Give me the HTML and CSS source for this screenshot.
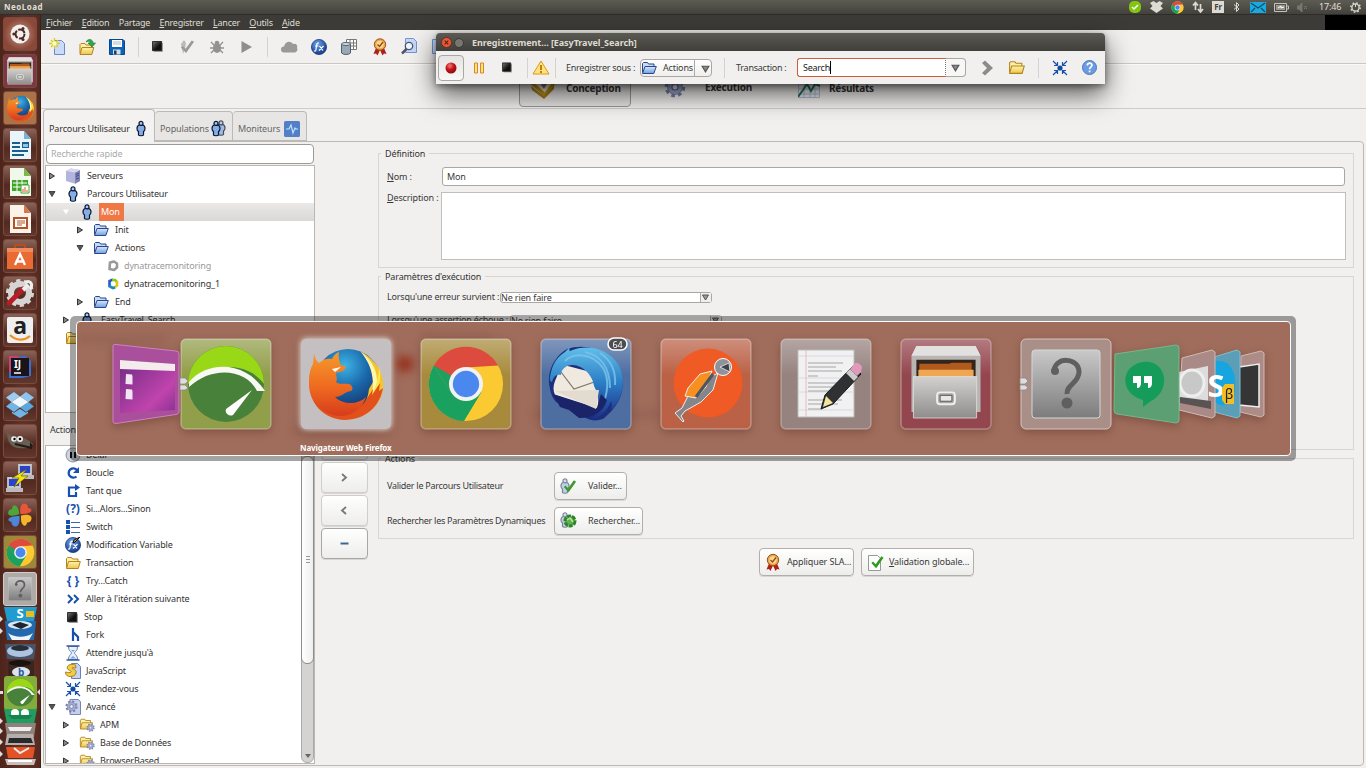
FILE: index.html
```html
<!DOCTYPE html>
<html lang="fr">
<head>
<meta charset="utf-8">
<title>NeoLoad</title>
<link rel="stylesheet" href="styles.css">
</head>
<body>
<svg class="defs" width="0" height="0">
<defs>
<linearGradient id="gFold" x1="0" y1="0" x2="0" y2="1"><stop offset="0" stop-color="#fff3a8"/><stop offset="1" stop-color="#efc44c"/></linearGradient>
<linearGradient id="gBlue" x1="0" y1="0" x2="0" y2="1"><stop offset="0" stop-color="#dbe8fb"/><stop offset="1" stop-color="#6f9ede"/></linearGradient>
<linearGradient id="gBlack" x1="0" y1="0" x2="1" y2="1"><stop offset="0" stop-color="#777"/><stop offset=".6" stop-color="#111"/></linearGradient>
<linearGradient id="gGrey" x1="0" y1="0" x2="0" y2="1"><stop offset="0" stop-color="#c9c9c9"/><stop offset="1" stop-color="#7c7c7c"/></linearGradient>
<linearGradient id="gCab" x1="0" y1="0" x2="0" y2="1"><stop offset="0" stop-color="#d2d1cf"/><stop offset="1" stop-color="#8f8d8b"/></linearGradient>
<linearGradient id="gFox" x1="0" y1="0" x2="0" y2="1"><stop offset="0" stop-color="#f59a2c"/><stop offset=".55" stop-color="#ef6a20"/><stop offset="1" stop-color="#d63c1c"/></linearGradient>
<linearGradient id="gPurp" x1="0" y1="0" x2="1" y2="1"><stop offset="0" stop-color="#702a86"/><stop offset=".7" stop-color="#c044ac"/><stop offset="1" stop-color="#8a3093"/></linearGradient>
<linearGradient id="gBird" x1="0" y1="0" x2="0" y2="1"><stop offset="0" stop-color="#62bfe9"/><stop offset=".5" stop-color="#2b7cc4"/><stop offset="1" stop-color="#1c2c86"/></linearGradient>
<radialGradient id="gGlobe" cx=".45" cy=".25" r=".7"><stop offset="0" stop-color="#3fb4e4"/><stop offset=".5" stop-color="#1a68ab"/><stop offset="1" stop-color="#173169"/></radialGradient>
<radialGradient id="gBall" cx=".4" cy=".3" r=".7"><stop offset="0" stop-color="#6fa3e8"/><stop offset="1" stop-color="#123b8e"/></radialGradient>
<radialGradient id="gRed" cx=".4" cy=".3" r=".7"><stop offset="0" stop-color="#f08080"/><stop offset=".5" stop-color="#c8141c"/><stop offset="1" stop-color="#8c0a10"/></radialGradient>
</defs>
<symbol id="folderb" viewBox="0 0 16 14"><path d="M1.500 11.500V2.500l1-1h4l1 1.500h5.500v3" fill="#c7daf6" stroke="#27468c"/><path d="M1.500 12.500 4 5.500h11.300l-2.500 7z" fill="url(#gBlue)" stroke="#27468c"/></symbol>
<symbol id="foldery" viewBox="0 0 16 14"><path d="M1.500 11.500V2.500l1-1h4l1 1.500h5.500v3" fill="#fdf0a4" stroke="#b3831f"/><path d="M1.500 12.500 3.500 5.500h11.800l-2 7z" fill="url(#gFold)" stroke="#b3831f"/></symbol>
<symbol id="gear" viewBox="0 0 16 16"><circle cx="8" cy="8" r="6" fill="none" stroke="#7a84ab" stroke-width="3" stroke-dasharray="2.500 2.212"/><circle cx="8" cy="8" r="3.900" fill="none" stroke="#a3acd0" stroke-width="3.200"/><circle cx="8" cy="8" r="5.400" fill="none" stroke="#6a749e" stroke-width=".5"/><circle cx="8" cy="8" r="2.200" fill="#f4f4fa" stroke="#5b6694" stroke-width=".8"/></symbol>
<symbol id="folderg" viewBox="0 0 18 16"><use href="#foldery" width="16" height="14"/><use href="#gear" x="8" y="6" width="10" height="10"/></symbol>
<symbol id="man" viewBox="0 0 10 16"><path d="M3.200 4.500C1.500 5 1 6.500 1 8c0 1.500.700 2.500 1.500 3v3.500c.5 1 4.500 1 5 0V11C8.300 10.500 9 9.500 9 8c0-1.500-.5-3-2.200-3.500z" fill="#86aee6" stroke="#0b1730" stroke-width="1.200"/><circle cx="5" cy="2.900" r="2" fill="#a9c6f0" stroke="#0b1730" stroke-width="1.200"/></symbol>
<symbol id="server" viewBox="0 0 16 16"><path d="M1 3 6 .5 15 2v11l-5 2.800L1 13z" fill="#b4b5dc"/><path d="M10 4.500 15 2v11l-5 2.800z" fill="#8083b5"/><path d="M1 3 6 .5 15 2l-5 2.500z" fill="#d8d8f1"/><path d="M11 6.500l3-1.500M11 8.500l3-1.500M11 11l3-1" stroke="#444a7c"/></symbol>
<symbol id="right" viewBox="0 0 8 8"><path d="M1.500 1v6l5-3z" fill="#888" stroke="#333"/></symbol>
<symbol id="down" viewBox="0 0 8 8"><path d="M1 1.500h6L4 6.500z" fill="#555" stroke="#444"/></symbol>
<symbol id="fx" viewBox="0 0 16 16"><circle cx="8" cy="8" r="7.600" fill="url(#gBall)" stroke="#0f2f72" stroke-width=".7"/><path d="M7.800 4.200C6 3.600 5.800 5 5.600 6.500L5 10.500c-.2 1.500-1 1.800-2 1.300M4 7h3.500M8.500 7l3.500 4.500M12.500 7 8 11.500" fill="none" stroke="#fff" stroke-width="1.200"/></symbol>
<symbol id="stop" viewBox="0 0 12 12"><path d="M2 2h10v10H2z" fill="#aaa"/><path d="M.5.5h10v10H.5z" fill="url(#gBlack)" stroke="#222"/></symbol>
<symbol id="rdv" viewBox="0 0 16 16"><circle cx="8" cy="8" r="2.600" fill="#144a9e"/><path d="M1 1l4 4M15 1l-4 4M1 15l4-4M15 15l-4-4M5.500 2v3.500H2M10.500 2v3.500H14M5.500 14v-3.500H2M10.500 14v-3.500H14" fill="none" stroke="#1750ad" stroke-width="1.200"/></symbol>
<symbol id="ring" viewBox="0 0 12 12"><path d="M3 2.500 7 1.500l3 2v4L7 10 2.500 9z" fill="none" stroke-width="2.600" stroke="currentColor" stroke-linejoin="round"/></symbol>
<symbol id="medal" viewBox="0 0 16 18"><path d="M4 10 1.500 16l2.500-.5L5.500 17.500 8 12l2.500 5.500 1.500-2 2.500.5L12 10z" fill="#b01f18"/><circle cx="8" cy="6.500" r="5.700" fill="#eba44e" stroke="#9a5417"/><circle cx="8" cy="6.500" r="3.700" fill="#ffd78b"/><path d="M5.500 6.500 7.500 8.500 11 4" fill="none" stroke="#8e4a15" stroke-width="1.300"/></symbol>
<symbol id="check" viewBox="0 0 16 16"><path d="M1.500 9 3.500 7.500 6.500 10.500 13 1.500 15.500 3 7 15z" fill="currentColor"/></symbol>
<symbol id="disk" viewBox="0 0 16 16"><path d="M.5.500h13.500l1.500 1.500v13.500H.500z" fill="#0d63b6" stroke="#084788"/><path d="M3 1h10v7H3z" fill="#fff"/><path d="M4 3h8M4 5h8" stroke="#a8b7c7"/><path d="M4 10.500h7.500v5H4z" fill="#d6dee7"/><path d="M5 11.500h2.500v4H5z" fill="#15406e"/></symbol>
<symbol id="chrome" viewBox="-40 -40 80 80"><circle r="38" fill="#fbc931"/><path d="M-33-19A38 38 0 0 1 33-19L0-17-15 9z" fill="#dd4b3e"/><path d="M-33-19A38 38 0 0 0-2 38L15 9-15 9z" fill="#1ba15f"/><path d="M-33-19-15 9 0 0z" fill="#1ba15f"/><path d="M-2 38 16 8 0 0-16 8z" fill="#1ba15f"/><path d="M-2 38 17 8h15z" fill="#fbc931"/><circle r="17.500" fill="#f2f2f2"/><circle r="13.500" fill="#4a87ee"/></symbol>
<symbol id="firefox" viewBox="0 0 80 80"><circle cx="42" cy="38" r="33" fill="url(#gGlobe)"/><path d="M54 7C72 17 79 32 77 46 73 66 56 75 40 75 54 70 62 58 63 45l4-7c1-12-5-23-13-31z" fill="#f7c52b"/><path d="M55 8c12 9 17 20 16 33l-5 12c2-14 2-29-11-45z" fill="#fff6b0"/><path d="M73 22c3 14 0 29-10 39l5-15c3-8 5-14 5-24z" fill="#fbe84a"/><path d="M77 44l-4 3 1-8-8 12 1-6-9 14c-8 7-20 9-28 2-7-1-14-7-14-14L4 33C1 55 13 74 38 76c22 0 36-14 39-32z" fill="#e2501c"/><path d="M8 9c1 5 2 8 5 10 4-4 9-5 13-4 2-4 4-6 7-7-1 5 0 9 2 13l5 2c-1 4-6 5-10 6 0 3 2 6 0 9 4 3 9 1 13 2 3 1 5 5 2 7-7 1-9 6-16 6 8 8 23 8 31 0-4 12-13 19-27 19C15 70 2 57 3 37 3 29 5 23 7 20z" fill="url(#gFox)"/><path d="M26 25l9-2-6 5z" fill="#fff"/></symbol>
<symbol id="cabinet" viewBox="0 0 70 74"><path d="M5 0h60l5 10v57H0V10z" fill="#b8b5b2"/><path d="M5 0h60l5 10H0z" fill="#e2e1e0"/><path d="M5 14h60v20H5z" fill="#33241c"/><path d="M8 18h30l3-1h20v15H8z" fill="#b05a1d"/><path d="M7 24h56v8H7z" fill="#f0a752"/><path d="M2 31h64v42H2z" fill="url(#gCab)" stroke="#e1dfdd" stroke-width=".8"/><rect x="26" y="47" width="18" height="12" rx="3" fill="#aaa" stroke="#eee" stroke-width="2"/><path d="M29 50h12v6H29z" fill="#e8e8e8" stroke="#555" stroke-width="1"/></symbol>
<symbol id="gauge" viewBox="0 0 80 80"><circle cx="40" cy="40" r="38" fill="#48813a"/><path d="M2 40a38 38 0 0 1 76 0C62 17 23 18 2 40z" fill="#98d817"/><path d="M3 38C22 16 60 17 79 47h-8C60 24 25 22 3 43z" fill="#f7f9f2"/><path d="M66 46 47 71a5 5 0 0 1-7-6z" fill="#fff"/></symbol>
<symbol id="qmark" viewBox="0 0 70 70"><rect x="1" y="1" width="68" height="68" rx="3" fill="url(#gGrey)" stroke="#d6d6d6"/><path d="M23 23C23 7 48 8 48 23c0 11-13 13-12 22" fill="none" stroke="#5f5f5f" stroke-width="5"/><circle cx="24" cy="22" r="4" fill="#5f5f5f"/><circle cx="36" cy="54" r="5.500" fill="#5f5f5f"/></symbol>
</svg>

<header class="panel"><span class="app-name">NeoLoad</span>
<div class="tray">
<svg width="14" height="14" viewBox="0 0 14 14"><rect x="1" y="1" width="12" height="12" rx="5" fill="#82c60f"/><path d="M4 7l2 2 4-4" fill="none" stroke="#fff" stroke-width="1.500"/></svg>
<svg width="13" height="12" viewBox="0 0 13 12"><path d="M0 2 3.500 0 6.500 2 9.500 0 13 2 10.500 5 13 7.500 6.500 12 0 7.500 2.500 5z" fill="#dedbd3"/></svg>
<svg width="13" height="13"><use href="#chrome"/></svg>
<svg width="12" height="12" viewBox="0 0 12 12"><path d="M3.500 9V2M1 4.500 3.500 1.500 6 4.500M8.500 3v7M6 8l2.500 3L11 8" fill="none" stroke="#dedbd3" stroke-width="1.700"/></svg>
<span class="lang">Fr</span>
<svg width="7" height="12" viewBox="0 0 7 12"><path d="M1 3.500 6 8 3.500 10.500V1.500L6 4 1 8.500" fill="none" stroke="#dedbd3"/></svg>
<svg width="16" height="11" viewBox="0 0 16 11"><path d="M0 0h16v11H0z" fill="#19abe0"/><path d="M1 1l7 5 7-5M1 10l4-4M15 10l-4-4" fill="none" stroke="#174a63" stroke-width="1.300"/></svg>
<svg width="15" height="9" viewBox="0 0 15 9"><path d="M.5.500h12v8H.500zM13 3h1.500v3H13" fill="none" stroke="#c6c3bb"/><path d="M2 2h9v5H2z" fill="#99968f"/><path d="M4 5l3-2v2l3-1" stroke="#fff" fill="none"/></svg>
<svg width="12" height="9" viewBox="0 0 12 9"><path d="M0 3h2l3-3v9L2 6H0zM7 3l3 3M10 3L7 6" fill="#77756e" stroke="#77756e"/></svg>
<span class="clock">17:46</span>
<svg width="11" height="11" viewBox="0 0 11 11"><circle cx="5.500" cy="5.500" r="3.600" fill="none" stroke="#dedbd3" stroke-width="1.300"/><circle cx="5.500" cy="5.500" r="4.700" fill="none" stroke="#dedbd3" stroke-width="1.400" stroke-dasharray="1.600 2.100"/><path d="M5.500 2v3" stroke="#dedbd3"/></svg>
</div></header>

<div class="desk">
<nav class="launcher">
<div class="tile t-ubuntu"><svg width="22" height="22" viewBox="0 0 22 22"><circle cx="11" cy="11" r="9.500" fill="#f4efec"/><circle cx="11" cy="11" r="4.500" fill="none" stroke="#4c2b20" stroke-width="2" stroke-dasharray="8 1.400"/><g fill="#4c2b20"><circle cx="4.800" cy="11" r="1.500"/><circle cx="14" cy="5.600" r="1.500"/><circle cx="14" cy="16.400" r="1.500"/></g></svg></div>
<div class="tile t-files"><svg width="26" height="28"><use href="#cabinet"/></svg></div>
<div class="tile t-fox"><svg width="29" height="29"><use href="#firefox"/></svg></div>
<div class="tile"><svg width="26" height="30" viewBox="0 0 26 30"><path d="M3 1h14l7 8v20H3z" fill="#e9f5fb"/><path d="M17 1l7 8h-7z" fill="#76b3d5"/><path d="M5 12h8v2H5zM5 16h8v2H5zM5 20h16v2H5zM5 24h12v2H5zM15 12h7v6h-7z" fill="#18608c"/><path d="M16 14h5v3h-5z" fill="#8fc6e4"/></svg></div>
<div class="tile"><svg width="26" height="30" viewBox="0 0 26 30"><path d="M3 1h14l7 8v20H3z" fill="#f0f9e9"/><path d="M17 1l7 8h-7z" fill="#78b948"/><path d="M5 13h16v11H5z" fill="#41a52b"/><path d="M6 16h14M6 20h14M10 13v11M15 13v11" stroke="#fff"/><path d="M14 18h8v8h-8z" fill="#fff" stroke="#41a52b"/><path d="M16 25v-3M18 25v-5M20 25v-2" stroke="#d9582a"/></svg></div>
<div class="tile"><svg width="26" height="30" viewBox="0 0 26 30"><path d="M3 1h14l7 8v20H3z" fill="#fdf2ea"/><path d="M17 1l7 8h-7z" fill="#d37a48"/><path d="M6 13h15v12H6z" fill="#b3532a"/><path d="M8 15h11v8H8z" fill="#fff"/><path d="M10 17h8M10 19h8M10 21h5" stroke="#b3532a"/></svg></div>
<div class="tile"><svg width="28" height="28" viewBox="0 0 28 28"><path d="M9 7V3h10v4" fill="none" stroke="#b34e21" stroke-width="2"/><path d="M1 6h26v21H1z" fill="#ea6a33"/><path d="M1 6h26v4H1z" fill="#f18b58"/><path d="M9 23l5-11 5 11M9.500 19.500h9" fill="none" stroke="#fff" stroke-width="2.300"/></svg></div>
<div class="tile"><svg width="28" height="28" viewBox="0 0 28 28"><circle cx="14" cy="14" r="9" fill="none" stroke="#d7d5d3" stroke-width="6"/><circle cx="14" cy="14" r="12" fill="none" stroke="#d7d5d3" stroke-width="4" stroke-dasharray="4 3.500"/><path d="M3 24 17 10" stroke="#b51e26" stroke-width="5" stroke-linecap="round"/><path d="M17 11l5-5" stroke="#eee" stroke-width="4"/><path d="M19 4c4-4 9 1 5 6" fill="none" stroke="#eee" stroke-width="3"/></svg></div>
<div class="tile"><svg width="28" height="28" viewBox="0 0 28 28"><rect x="1" y="1" width="26" height="26" rx="2" fill="#efefef"/><text x="14" y="18" font-size="23" font-weight="700" fill="#222" text-anchor="middle">a</text><path d="M4 19c6 6 14 6 20 1" fill="none" stroke="#f09020" stroke-width="2.200"/></svg></div>
<div class="tile"><svg width="24" height="24" viewBox="0 0 24 24"><path d="M1 3l16-2 6 5v15l-9 2H1z" fill="#3b6ed0"/><path d="M1 1h10v16H1z" fill="#c54372"/><path d="M3 3h18v18H3z" fill="#181419"/><text x="6" y="13" font-size="10" font-weight="700" fill="#fff">IJ</text><path d="M6 18h7" stroke="#fff" stroke-width="1.500"/></svg></div>
<div class="tile"><svg width="30" height="28" viewBox="0 0 30 28"><path d="M9 2l6 4.500L6.500 12 1 7.500z" fill="#9ccdf1"/><path d="M21 2l8 5.500-5.500 4.500L15 6.500z" fill="#8cc4ee"/><path d="M1 16.500 6.500 12l8.500 5.500L9 22z" fill="#6fb5e8"/><path d="M29 16.500 23.500 12 15 17.500l6 4.500z" fill="#5aa6de"/><path d="M15 6.500 23.500 12 15 17.500 6.500 12z" fill="#eef7fd"/><path d="M7 21.500l2 1.200 6-4 6 4 2-1.200v1.800L15 28l-8-4.700z" fill="#6fb5e8"/></svg></div>
<div class="tile"><svg width="30" height="24" viewBox="0 0 30 24"><path d="M2 3l4 3 3 1c8 0 15 4 19 8-1 4-9 5-15 4C6 18 2 13 2 3z" fill="#6a5d51"/><circle cx="9" cy="10" r="2.800" fill="#eee"/><circle cx="15" cy="10" r="3" fill="#eee"/><circle cx="9.500" cy="10" r="1.200"/><circle cx="15" cy="10" r="1.300"/><path d="M10 15l17 4" stroke="#201a18" stroke-width="2"/><path d="M25 13l3 4-3 1z" fill="#1d1713"/></svg></div>
<div class="tile"><svg width="30" height="30" viewBox="0 0 30 30"><path d="M14 2h12v9H14z" fill="#2a43cb" stroke="#c9c9c9" stroke-width="1.800"/><path d="M12 14h17" stroke="#bbb" stroke-width="4"/><path d="M3 15h12v9H3z" fill="#2a43cb" stroke="#c9c9c9" stroke-width="1.800"/><path d="M1 27h17" stroke="#bbb" stroke-width="4"/><path d="M22 6 7 15h7l-5 9 14-11h-7z" fill="#f3e512" stroke="#564f00" stroke-width=".6"/></svg></div>
<div class="tile"><svg width="28" height="28" viewBox="0 0 28 28"><path d="M13.500 13C5 15 1 13 3 9c1-2 3-2 4-2 0-5 7-6 6.500 6z" fill="#4ea53c" transform="rotate(-8 14 14)"/><path d="M14.500 13C13 4 17 1 20 3c2 1 2 3 2 4 5 0 6 6-7.500 6z" fill="#e8563a"/><path d="M15 14.500c9-2 12 1 10 5-1 2-3 2-4 2 0 5-7 5-6-7z" fill="#f5b42a"/><path d="M13.500 15c1 9-3 12-6 10-2-1-2-3-2-4-5-1-5-6 8-6z" fill="#4d86d6"/></svg></div>
<div class="tile t-chrome"><svg width="29" height="29"><use href="#chrome"/></svg></div>
<div class="tile t-grey"><svg width="24" height="24"><use href="#qmark"/></svg></div>
<svg class="stack" width="41" height="162" viewBox="0 606 41 162"><path d="M4 606h33l-3 14H7z" fill="#219cd1"/><text x="20" y="617" font-size="13" font-weight="700" fill="#fff" text-anchor="middle">S</text><path d="M26 610h8v6h-8z" fill="#e8bd22"/><path d="M5 620h31l-2 19H7z" fill="#2369ad"/><ellipse cx="20" cy="624" rx="12" ry="4" fill="#dae7f4"/><path d="M12 624l8-3 9 3-8 4z" fill="#20242b"/><path d="M8 632c7 5 18 5 25 0l-4 7H12z" fill="#f1f4fa"/><path d="M5 643h31l-2 15H7z" fill="#455469"/><ellipse cx="20" cy="650" rx="13" ry="6" fill="#acc4e2"/><ellipse cx="20" cy="647" rx="9" ry="3" fill="#292e36"/><path d="M8 660h26v15H8z" fill="#3b2520"/><ellipse cx="20" cy="662" rx="11" ry="3" fill="#17130f"/><ellipse cx="21" cy="671" rx="9" ry="5" fill="#dfe4ec"/><text x="21" y="675" font-size="10" font-weight="700" fill="#285aa7" text-anchor="middle">b</text><rect x="4" y="675" width="33" height="34" rx="3" fill="#83ab3d"/><use href="#gauge" x="6" y="677" width="29" height="29"/><path d="M4 708h33l-3 15H7z" fill="#219d61"/><circle cx="15" cy="712" r="4" fill="#fff"/><circle cx="25" cy="712" r="4" fill="#fff"/><path d="M8 714h25l-4 4H12z" fill="#16824d"/><path d="M5 722h31l-2 14H7z" fill="#91817c"/><path d="M8 726h24l-2 4H10z" fill="#eee"/><path d="M7 733h26l2 11H5z" fill="#b4aeac"/><path d="M9 737h22l2 5H8z" fill="#292929"/><path d="M6 746h29l-2 11H8z" fill="#e45327"/><path d="M14 747l6 5 9-5" fill="none" stroke="#eee" stroke-width="2"/><path d="M5 758h31l-2 6H7z" fill="#c9bfba"/><path d="M8 759h24v2H8z" fill="#fff"/><g fill="#dedede"><path d="M0 615l3 3-3 3zM0 627l3 3-3 3zM0 690h3v3H0zM41 687l-4 4 4 4zM0 717l3 3-3 3zM0 727l3 3-3 3zM0 738l3 3-3 3zM0 750l3 3-3 3z"/></g></svg>
</nav>

<main class="app">
<div class="menubar"><span><u>F</u>ichier</span><span><u>E</u>dition</span><span>Partage</span><span><u>E</u>nregistrer</span><span><u>L</u>ancer</span><span><u>O</u>utils</span><span><u>A</u>ide</span><i></i></div>
<div class="toolbar">
<svg style="--x:49px" width="16" height="18" viewBox="0 0 16 18"><path d="M5.500 2.500h7l3 3v11h-10z" fill="#c9dafa" stroke="#6d87c9"/><path d="M5.500 0v11M0 5.500h11M2 2l7 7M9 2 2 9" stroke="#d9cb21" stroke-width="1.300"/><circle cx="5.500" cy="5.500" r="2.200" fill="#fffbb0"/></svg>
<svg style="--x:78px" width="19" height="18" viewBox="0 0 19 18"><use href="#foldery" x="0" y="4" width="17" height="14"/><path d="M8 4c2-4 7-3 7 1h2.500L14 9l-4-4h2c0-2-2-2-4-1z" fill="#31a64a" stroke="#147b2c" stroke-width=".6"/></svg>
<svg style="--x:109px" width="16" height="16"><use href="#disk"/></svg>
<b style="--x:138px"></b>
<svg style="--x:152px" width="11" height="11"><use href="#stop"/></svg>
<svg style="--x:178px" class="dis" width="17" height="16" viewBox="0 0 17 16"><path d="M3 5 6 1l2 3-1 6-2 5z" fill="#bbb"/><use href="#check" x="1" width="16" height="15"/></svg>
<svg style="--x:210px" width="14" height="14" viewBox="0 0 14 14"><path d="M1 2l4 4M13 2 9 6M0 8h4M14 8h-4M1 13l4-4M13 13 9 9" stroke="#929292" stroke-width="1.400"/><ellipse cx="7" cy="8" rx="4" ry="5" fill="#929292"/><circle cx="7" cy="3" r="2.300" fill="#929292"/></svg>
<svg style="--x:241px" width="11" height="12" viewBox="0 0 11 12"><path d="M.5 0v12L11 6z" fill="#8e8e8e"/></svg>
<b style="--x:267px"></b>
<svg style="--x:281px" width="17" height="12" viewBox="0 0 17 12"><path d="M3 11.500a3 3 0 0 1 0-6C4 1 9-1 12 3c3-1 5 1 4 4 1 2 0 4-2 4.500z" fill="#999"/></svg>
<svg style="--x:311px" width="16" height="16"><use href="#fx"/></svg>
<svg style="--x:341px" width="16" height="16" viewBox="0 0 16 16"><path d="M5.500.500h10v10h-10zM5.500 4h10M5.500 7h10M9 .500v10M12.500.500v10" fill="#fff" stroke="#777"/><path d="M.5 5v9c2 2 7 2 9 0V5z" fill="#99a8b6" stroke="#52606d"/><ellipse cx="5" cy="5" rx="4.500" ry="1.500" fill="#d6dee5" stroke="#52606d"/></svg>
<svg style="--x:372px" width="16" height="18"><use href="#medal"/></svg>
<svg style="--x:401px" width="16" height="17" viewBox="0 0 16 17"><path d="M4.500.500h8l3 3v11h-11z" fill="#c6d7fa" stroke="#7892d2"/><circle cx="8" cy="8" r="3.700" fill="#eef6ff" stroke="#4a5668" stroke-width="1.300"/><path d="M5.500 11 1 15.500" stroke="#4a5668" stroke-width="2.500"/></svg>
<svg style="--x:432px" width="14" height="16" viewBox="0 0 14 16"><path d="M.5.500h12v14H.500z" fill="#cbdcfb" stroke="#7493d4"/></svg>
</div>
<div class="modes">
<div class="mode on"><svg width="26" height="22" viewBox="0 0 26 22"><path d="M2 6 12 0 24 6 15 18z" fill="#f3ead0" stroke="#bf9420" stroke-width="3.500" stroke-linejoin="round"/><path d="M13 3l4 4-3 5-3-4z" fill="#777"/><path d="M1 9l13 10 10-11v4L14 22 2 13z" fill="#a67f1a"/></svg><span>Conception</span></div>
<div class="mode m2"><svg width="22" height="22"><use href="#gear"/></svg><span>Exécution</span></div>
<div class="mode m3"><svg width="22" height="19" viewBox="0 0 22 19"><path d="M.5.500h21v18H.500zM.500 5h21M.500 10h21M.500 15h21M6 .500v18M12 .500v18M17 .500v18" fill="#e9edf6" stroke="#b4bccc"/><path d="M0 18 5 11l4-6 4 7 4-7 5 2" fill="none" stroke="#257459" stroke-width="2"/></svg><span>Résultats</span></div>
</div>
<div class="tabs">
<div class="tab active"><span>Parcours Utilisateur</span><svg width="10" height="17"><use href="#man"/></svg></div>
<div class="tab p2"><span>Populations</span><svg width="15" height="17" viewBox="0 0 15 17"><use href="#man" x="5" y="0" width="10" height="16" opacity=".75"/><use href="#man" x="0" y="0" width="10" height="17"/></svg></div>
<div class="tab p3"><span>Moniteurs</span><svg width="16" height="16" viewBox="0 0 16 16"><rect width="16" height="16" rx="1.500" fill="#527fc8"/><path d="M2 8h3l2-4 2 8 2-5 1 1h2" fill="none" stroke="#bfe1fb" stroke-width="1.200"/></svg></div>
</div>
<div class="work">
<section class="left">
<div class="search">Recherche rapide</div>
<div class="tree">
<div class="row l0"><svg class="ar"><use href="#right"/></svg><svg class="ic"><use href="#server"/></svg><span>Serveurs</span></div>
<div class="row l0"><svg class="ar"><use href="#down"/></svg><svg class="ic"><use href="#man"/></svg><span>Parcours Utilisateur</span></div>
<div class="row l1 sel"><svg class="ar" viewBox="0 0 8 8"><path d="M1 1.500h6L4 6.500z" fill="#fff"/></svg><svg class="ic"><use href="#man"/></svg><span>Mon</span></div>
<div class="row l2"><svg class="ar"><use href="#right"/></svg><svg class="ic"><use href="#folderb"/></svg><span>Init</span></div>
<div class="row l2"><svg class="ar"><use href="#down"/></svg><svg class="ic"><use href="#folderb"/></svg><span>Actions</span></div>
<div class="row l3 off"><svg class="ic"><use href="#ring"/></svg><span>dynatracemonitoring</span></div>
<div class="row l3"><svg class="ic" viewBox="0 0 12 12"><path d="M2.500 9V3L6 1.500" fill="none" stroke="#2b57ca" stroke-width="2.600"/><path d="M5 2h3l2 2" fill="none" stroke="#8bc620" stroke-width="2.600"/><path d="M10 3v4.500L7 10" fill="none" stroke="#d5cb18" stroke-width="2.600"/><path d="M8 9.500 6 10 2 8" fill="none" stroke="#168fc5" stroke-width="2.600"/></svg><span>dynatracemonitoring_1</span></div>
<div class="row l2"><svg class="ar"><use href="#right"/></svg><svg class="ic"><use href="#folderb"/></svg><span>End</span></div>
<div class="row l1"><svg class="ar"><use href="#right"/></svg><svg class="ic"><use href="#man"/></svg><span>EasyTravel_Search</span></div>
<div class="row l0 noar"><svg class="ic"><use href="#foldery"/></svg><span></span></div>
</div>
<div class="caption">Actions</div>
<div class="listbox"><div class="list">
<div class="row noar"><svg class="ic" viewBox="0 0 16 16"><circle cx="8" cy="8" r="7" fill="#cdd3db" stroke="#8892a0"/><path d="M6 5v6M10 5v6" stroke="#111" stroke-width="2"/></svg><span>Délai</span></div>
<div class="row noar"><svg class="ic" viewBox="0 0 16 16"><path d="M11.500 11.500A4.700 4.700 0 1 1 12 5" fill="none" stroke="#1750ad" stroke-width="2.300"/><path d="M14 2v6H8z" fill="#1750ad"/></svg><span>Boucle</span></div>
<div class="row noar"><svg class="ic" viewBox="0 0 16 16"><path d="M11 9v4H4V4.500h7" fill="none" stroke="#1750ad" stroke-width="2.200"/><path d="M10 1v7l5-3.500z" fill="#1750ad"/></svg><span>Tant que</span></div>
<div class="row noar"><strong class="ic sym">(?)</strong><span>Si...Alors...Sinon</span></div>
<div class="row noar"><svg class="ic" viewBox="0 0 16 16"><path d="M1 1h4v4H1zM1 6h4v4H1zM1 11h4v4H1z" fill="#1750ad"/><path d="M6 3.500h9M6 8.500h9M6 13.500h9" stroke="#3d66ac"/></svg><span>Switch</span></div>
<div class="row noar"><svg class="ic" viewBox="0 0 16 16"><use href="#fx"/><path d="M8 6l1-3 6-3-5 5z" fill="#e6a13a" stroke="#111"/></svg><span>Modification Variable</span></div>
<div class="row noar"><svg class="ic"><use href="#foldery"/></svg><span>Transaction</span></div>
<div class="row noar"><strong class="ic sym">{ }</strong><span>Try...Catch</span></div>
<div class="row noar"><svg class="ic" viewBox="0 0 16 16"><path d="M3 4l4 4-4 4M9 4l4 4-4 4" fill="none" stroke="#1750ad" stroke-width="2"/></svg><span>Aller à l'itération suivante</span></div>
<div class="row noar"><svg class="ic s12"><use href="#stop"/></svg><span>Stop</span></div>
<div class="row noar"><svg class="ic" viewBox="0 0 16 16"><path d="M8 1v13M8 5l5 5v4" fill="none" stroke="#1750ad" stroke-width="2.200"/></svg><span>Fork</span></div>
<div class="row noar"><svg class="ic" viewBox="0 0 16 16"><path d="M3.500 1.500c0 5 3 5 3 6.500s-3 2-3 6.500h9c0-4.500-3-5-3-6.500s3-1.500 3-6.500z" fill="#e6effb" stroke="#5b7db5"/><path d="M1.500 1h13M1.500 15h13" stroke="#31599b" stroke-width="1.400"/><path d="M5 13.500l3-2.500 3 2.500zM6 5h4l-2 2z" fill="#7ea2d8"/></svg><span>Attendre jusqu'à</span></div>
<div class="row noar"><svg class="ic" viewBox="0 0 16 16"><path d="M6.500.500h6l3 3v12h-9z" fill="#c6d5f5" stroke="#6880bd"/><path d="M10.500 2C5 0 1 3 2.500 6 4 8 7 7.500 6 9c-1 1-3 .5-5.500 0C0 15 10 15 11 10 12 6 7 6.500 7 5c1-1 2 0 4 0z" fill="#f2cd44" stroke="#a07913" stroke-width=".9"/></svg><span>JavaScript</span></div>
<div class="row noar"><svg class="ic"><use href="#rdv"/></svg><span>Rendez-vous</span></div>
<div class="row l0"><svg class="ar"><use href="#down"/></svg><svg class="ic" viewBox="0 0 16 16"><path d="M5 .500h8l2.500 2v13H5z" fill="#c6d0ee" stroke="#7886b3"/><use href="#gear" x="0" y="1" width="13" height="13"/></svg><span>Avancé</span></div>
<div class="row l1"><svg class="ar"><use href="#right"/></svg><svg class="ic"><use href="#folderg"/></svg><span>APM</span></div>
<div class="row l1"><svg class="ar"><use href="#right"/></svg><svg class="ic"><use href="#folderg"/></svg><span>Base de Données</span></div>
<div class="row l1"><svg class="ar"><use href="#right"/></svg><svg class="ic"><use href="#folderg"/></svg><span>BrowserBased</span></div>
</div><div class="scroll"><div class="thumb"><i></i></div><svg width="8" height="8" viewBox="0 0 8 8"><path d="M1 2h6L4 6z" fill="#666"/></svg></div></div>
</section>
<div class="mid"><button></button><button><svg width="9" height="9" viewBox="0 0 9 9"><path d="M2 1l4 3.500L2 8" fill="none" stroke="#777" stroke-width="1.800"/></svg></button><button><svg width="9" height="9" viewBox="0 0 9 9"><path d="M6 1 2 4.500 6 8" fill="none" stroke="#777" stroke-width="1.800"/></svg></button><button class="act"><svg width="9" height="9" viewBox="0 0 9 9"><path d="M.5 4.500h8" stroke="#3f6796" stroke-width="2"/></svg></button></div>
<section class="right">
<div class="group def"><h2>Définition</h2><div class="line nom"><label><u>N</u>om :</label><div class="input">Mon</div></div><div class="line desc"><label><u>D</u>escription :</label><div class="area"></div></div></div>
<div class="group par"><h2>Paramètres d'exécution</h2>
<div class="line"><label>Lorsqu'une erreur survient :</label><div class="combo">Ne rien faire<i><svg width="9" height="7" viewBox="0 0 8 7"><path d="M1 1h6L4 6z" fill="#999" stroke="#555"/></svg></i></div></div>
<div class="line"><label>Lorsqu'une assertion échoue :</label><div class="combo c2">Ne rien faire<i><svg width="9" height="7" viewBox="0 0 8 7"><path d="M1 1h6L4 6z" fill="#999" stroke="#555"/></svg></i></div></div></div>
<div class="group acts"><h2>Actions</h2>
<div class="line"><label>Valider le Parcours Utilisateur</label><button class="bv"><svg width="18" height="18" viewBox="0 0 18 18"><use href="#man" x="0" y="1" width="10" height="16" opacity=".5"/><use href="#check" x="2" y="2" width="15" height="14" color="#3f9a2c"/></svg><span>Valider...</span></button></div>
<div class="line"><label>Rechercher les Paramètres Dynamiques</label><button class="br"><svg width="18" height="18" viewBox="0 0 18 18"><use href="#man" x="0" y="0" width="10" height="16" opacity=".5"/><circle cx="10" cy="9" r="5" fill="#5fb24d" stroke="#2f8428" stroke-width="3" stroke-dasharray="4 1"/><path d="M7 8l3-2 3 4" fill="none" stroke="#b5e4a0" stroke-width="1.500"/></svg><span>Rechercher...</span></button></div></div>
<div class="foot"><button class="b1"><svg width="16" height="19"><use href="#medal"/></svg><span>Appliquer SLA...</span></button><button class="b2"><svg width="17" height="17" viewBox="0 0 17 17"><path d="M1.500 1.500h9l3 3v12h-12z" fill="#fff" stroke="#999"/><use href="#check" x="3" y="1" width="14" height="14" color="#2f9a24"/></svg><span><u>V</u>alidation globale...</span></button></div>
</section>
</div>
</main>
</div>

<section class="dialog">
<div class="title"><svg width="11" height="11" viewBox="0 0 11 11"><circle cx="5.500" cy="5.500" r="5" fill="#e8593a" stroke="#6a2c1f"/><path d="M3.700 3.700l3.600 3.600M7.300 3.700 3.700 7.300" stroke="#5a2014" stroke-width="1.200"/></svg><svg width="10" height="10" viewBox="0 0 10 10"><circle cx="5" cy="5" r="4.500" fill="#77766f" stroke="#3a3934"/></svg><span>Enregistrement... [EasyTravel_Search]</span></div>
<div class="bar">
<div class="rec"><svg width="12" height="12" viewBox="0 0 12 12"><circle cx="6" cy="6" r="5.500" fill="url(#gRed)"/></svg></div>
<svg style="--x:37px" width="12" height="12" viewBox="0 0 12 12"><path d="M1.500 1h3v10h-3zM7.500 1h3v10h-3z" fill="#fce08d" stroke="#d98a17"/></svg>
<svg style="--x:66px" width="10" height="11"><use href="#stop"/></svg>
<b style="--x:91px"></b>
<svg style="--x:96px" width="18" height="15" viewBox="0 0 18 15"><path d="M9 1 17 14H1z" fill="#ffe67a" stroke="#e0951c"/><path d="M9 5v5M9 11v2" stroke="#c77a10" stroke-width="2"/></svg>
<b style="--x:119px"></b>
<span style="--x:130px" class="lab">Enregistrer sous :</span>
<div class="drop"><svg width="16" height="14"><use href="#folderb"/></svg><span>Actions</span><i><svg width="9" height="8" viewBox="0 0 8 7"><path d="M1 1h6L4 6z" fill="#888" stroke="#555"/></svg></i></div>
<b style="--x:288px"></b>
<span style="--x:300px" class="lab">Transaction :</span>
<div class="tin"><span>Search</span></div><div class="tbtn"><svg width="9" height="8" viewBox="0 0 8 7"><path d="M1 1h6L4 6z" fill="#888" stroke="#555"/></svg></div>
<svg style="--x:545px" width="13" height="16" viewBox="0 0 13 16"><path d="M1 3 4 .5 12 8l-8 7.500L1 13l5-5z" fill="#8b8b8b"/></svg>
<svg style="--x:572px" width="17" height="15"><use href="#foldery"/></svg>
<b style="--x:602px"></b>
<svg style="--x:616px" width="16" height="16"><use href="#rdv"/></svg>
<svg style="--x:646px" width="15" height="15" viewBox="0 0 15 15"><circle cx="7.500" cy="7.500" r="7" fill="#6b9be0" stroke="#477ac2"/><path d="M5.300 5.500c0-3.200 4.600-3 4.600-.2 0 1.900-2.300 1.900-2.300 4M7.600 10.500v1.800" fill="none" stroke="#fff" stroke-width="1.700"/></svg>
</div></section>

<section class="switcher"><div class="inner">
<svg class="ghosts" width="1214" height="133" viewBox="0 0 1214 133"><ellipse cx="328" cy="42" rx="9" ry="8" fill="#96321f"/><path d="M0 17h90M345 15h70M455 92h130M215 108h80" stroke="#7d4d42" stroke-width="8" opacity=".3"/></svg>
<svg class="icons" width="1214" height="133" viewBox="77 322 1214 133">
<defs><g id="shine"><rect width="90" height="90" rx="5" fill="url(#gl)" stroke="#fff" stroke-opacity=".3" stroke-width="1.500"/></g><linearGradient id="gl" x1="0" y1="0" x2="0" y2="1"><stop offset="0" stop-color="#fff" stop-opacity=".3"/><stop offset=".4" stop-color="#fff" stop-opacity=".02"/></linearGradient></defs>
<path d="M113 346q0-2 3-1.500l60 6.500q3 0 3 3v58q0 2-3 2.500l-60 9q-3 0-3-2z" fill="#a94f9c" stroke="#cd84be"/><path d="M120 360l55 4v46l-55 3z" fill="url(#gPurp)"/><path d="M120 360l55 4v7l-55-2z" fill="#f4ebed"/><path d="M126 374l6 .5.500 2v8l-7-.5zM126 389l6 .5.500 2v8l-7-.5z" fill="#f0e6f1"/>
<rect x="181" y="339" width="90" height="90" rx="5" fill="#8f9c46"/><use href="#shine" x="181" y="339"/><use href="#gauge" x="186" y="343" width="80" height="82"/><path d="M180 378h5l3 3-3 3h-5zM180 385h5l3 3-3 2h-5z" fill="#ddd" stroke="#888" stroke-width=".7"/>
<rect x="301" y="339" width="90" height="90" rx="5" fill="#c4c0c2" class="glow"/><use href="#firefox" x="306" y="344" width="80" height="80"/>
<rect x="421" y="339" width="90" height="90" rx="5" fill="#a58838"/><use href="#shine" x="421" y="339"/><use href="#chrome" x="427" y="345" width="78" height="78"/>
<rect x="541" y="339" width="90" height="90" rx="5" fill="#4a6b9f"/><use href="#shine" x="541" y="339"/><path d="M549 383c-1-16 8-28 18-34 24-8 47 6 54 25 5 18-3 33-18 45-6 2-12 2-17-1l-30-16c-5-6-6-12-7-19z" fill="#1b2f7c"/><path d="M560 369l4-4 38 10-4 34-43-14c-2-4-2-9 0-14z" fill="#efe9df"/><path d="M561 372l13 17 26-9" fill="none" stroke="#81776b" stroke-width="1.200"/><path d="M550 377c2-13 7-20 15-25l5-5c-1 2-1 4 0 4 18-8 38-2 48 13 8 14 6 34-7 46 1-4 1-6 0-9-3 9-9 15-19 19 8-13 8-23 2-34-1-11-14-25-27-20-5 3-6 6-6 9-5-1-7 1-9 7-3-1-2-3-2-5z" fill="url(#gBird)"/><path d="M565 361c8-8 27-9 38 7 6 10 5 22 1 34M585 352c15 3 25 15 25 36M600 353c11 7 16 18 15 32" fill="none" stroke="#7bc4ec" stroke-width="2" opacity=".8"/><path d="M553 394l44 14 4-14 6 6c-4 12-13 18-28 18l-10-8-9-3z" fill="#1b2468"/><path d="M555 391l41 18 3-19z" fill="#e3dbcf"/><rect x="608" y="338" width="19" height="12" rx="6" fill="#4d4d50" stroke="#fff" stroke-width="1.500"/><text x="617.500" y="347.500" font-size="9" fill="#fff" text-anchor="middle">64</text>
<rect x="661" y="339" width="90" height="90" rx="5" fill="#b95e42"/><use href="#shine" x="661" y="339"/><circle cx="708" cy="383" r="34.500" fill="#f05a24"/><path d="M718 373l-5 17-12 12-16 9-4 5 3 5-1 1-8-9 7-5 7-14 8-10z" fill="#85868b" stroke="#eee"/><path d="M712 371l-12 3-12 14-3 8 11 2 10-11z" fill="#f79020" stroke="#eee"/><path d="M713 374l-17 23" stroke="#50545b" stroke-width="3"/><circle cx="723" cy="367" r="8.500" fill="#8e9299" stroke="#fff"/><path d="M720 367l9-4 1 9z" fill="#3f444b" stroke="#fff" stroke-width=".7"/>
<rect x="781" y="339" width="90" height="90" rx="5" fill="#94807c"/><use href="#shine" x="781" y="339"/><path d="M798 350h56v67h-56z" fill="#f2f1f2" stroke="#bbb"/><path d="M798 356h56M798 378h56M798 392h56M798 410h56" stroke="#d5d9e4"/><path d="M808 363h35M808 367h28M808 371h34M808 376h10M808 383h34M808 387h34M808 391h22M808 400h34M808 404h30M808 409h14" stroke="#a5a5a5"/><path d="M806 350v67" stroke="#e5bcbc"/><path d="M821 409l4-14 28-29 8 8-28 30z" fill="#303133" stroke="#17191a"/><path d="M823 407l3-11 7 7z" fill="#f3e39b"/><path d="M846 373l4-4 8 8-4 4z" fill="#ccc"/><path d="M850 369l5-6q4-1 7 4l-1 5-4 4z" fill="#df9abc"/>
<rect x="901" y="339" width="90" height="90" rx="5" fill="#92424b"/><use href="#shine" x="901" y="339"/><use href="#cabinet" x="911" y="346" width="70" height="73"/>
<rect x="1021" y="339" width="90" height="90" rx="5" fill="#aa8e88" stroke="#d6c5c1"/><use href="#qmark" x="1031" y="349" width="70" height="70"/><path d="M1020 378h5l3 3-3 3h-5zM1020 385h5l3 3-3 2h-5z" fill="#ddd" stroke="#888" stroke-width=".7"/>
<path d="M1241 356l20-5 3 2v62l-3 2-21-5z" fill="#ad8b86" stroke="#d0b9b5"/><path d="M1239 367l20-3v43l-20-2z" fill="#353535" stroke="#eee" stroke-width="1.500"/><path d="M1214 357l23-7 3 2v64l-3 2-23-6z" fill="#5a9eb8" stroke="#83bccc"/><path d="M1214 361c18-3 24 15 20 33-6 14-14 13-20 7z" fill="#16a5df"/><path d="M1182 358l30-8 3 2v64l-3 2-33-8z" fill="#a98a86" stroke="#d0b9b5"/><path d="M1179 372l29-6v36l-31-5z" fill="#ddd"/><ellipse cx="1192" cy="383" rx="12" ry="13" fill="#c8c8c8" stroke="#eee" stroke-width="3"/><path d="M1180 397l31 4v8l-31-6z" fill="#595353"/><text x="1216" y="397" font-size="31" font-weight="700" fill="#fff" text-anchor="middle">S</text><path d="M1222 388l3-4h9v20h-9l-3-4z" fill="#f2be23"/><text x="1229" y="399" font-size="14" fill="#222" text-anchor="middle">β</text>
<path d="M1115 354l61-9q3 0 3 3v72q0 3-3 3l-59-9q-3 0-3-4z" fill="#5b9f73" stroke="#78b68b"/><path d="M1143 362c24-3 29 29 8 39l-8 6v-7c-25-7-22-35 0-38z" fill="#159c5b"/><path d="M1133 376h8v7q0 5-4 5v-5h-4zM1144 376h8v7q0 5-4 5v-5h-4z" fill="#fff"/>
</svg>
<span class="name">Navigateur Web Firefox</span>
</div></section>
</body>
</html>
```
FILE: styles.css
```css
* { box-sizing: border-box; }
body { margin: 0; width: 1366px; height: 768px; overflow: hidden; position: relative; background: #f1f0ee; color: #3a3a3a; font-family: "Noto Sans", "Open Sans", sans-serif; font-size: 9px; line-height: 12px; letter-spacing: -.13px; }
svg { flex: none; display: block; }
svg text { font-family: "Noto Sans", sans-serif; }
.defs { position: absolute; }
button { font: inherit; letter-spacing: inherit; color: inherit; padding: 0; border: 1px solid #b2aea9; border-radius: 4px; background: linear-gradient(#fff, #ededeb); display: flex; align-items: center; box-shadow: 0 1px 0 #d8d6d3; }
span, label { white-space: nowrap; }

.panel { height: 15px; background: linear-gradient(#5d5c54, #42413b); border-bottom: 1px solid #2e2d29; color: #e3dfd5; display: flex; justify-content: space-between; align-items: center; padding: 0 5px 0 4px; }
.app-name { font-weight: 700; font-size: 8px; letter-spacing: .5px; }
.tray { display: flex; align-items: center; }
.tray > * { margin-right: 8px; }
.tray > :nth-child(5) { margin-right: 9px; }
.tray > :nth-child(6) { margin-right: 10px; }
.tray > :nth-child(9) { margin-right: 10px; }
.tray > :last-child { margin-right: 0; }
.lang { background: #dedbd3; color: #444; font-weight: 700; font-size: 8px; width: 12px; height: 12px; text-align: center; }
.clock { font-size: 9px; width: 23px; }

.desk { display: flex; height: 753px; }
.launcher { width: 41px; flex: none; background: linear-gradient(90deg, #4d241b, #643227 60%, #56291f); border-right: 1px solid #3f211a; padding: 2px 0 0 3px; overflow: hidden; }
.tile { width: 34px; height: 34px; margin-bottom: 3px; border-radius: 3px; background: linear-gradient(#8b6257, #52291f 60%, #61372c); border: 1px solid #754c41; display: flex; align-items: center; justify-content: center; }
.t-ubuntu { background: radial-gradient(#c19a8d, #8b4838 70%); }
.t-files { background: #803544; }
.t-fox { background: #ad7347; }
.t-chrome { background: #9d8738; }
.t-grey { background: #b0aaa7; border-color: #d1cdca; }
.stack { margin: -2px 0 0 -3px; }

.app { flex: 1; min-width: 0; display: flex; flex-direction: column; }
.menubar { height: 15px; flex: none; background: #3c3b37; color: #dfdbd2; display: flex; padding-left: 5px; font-size: 9px; line-height: 15px; }
.menubar span { margin-right: 9.300px; letter-spacing: -.24px; }
.menubar i { margin-left: auto; width: 41px; background: #000; }
.toolbar { height: 34px; flex: none; border-bottom: 1px solid #cbc8c4; display: grid; align-items: center; }
.toolbar > * { grid-area: 1 / 1; margin-left: calc(var(--x) - 41px); }
.toolbar b, .bar b { width: 1px; height: 20px; background: #d5d3d0; }
.dis { color: #999; }
.modes { height: 45px; flex: none; border-top: 1px solid #faf9f9; border-bottom: 1px solid #cfccc8; display: flex; align-items: flex-start; }
.mode { height: 40px; display: flex; align-items: center; font-weight: 700; font-size: 10px; color: #333; letter-spacing: -.2px; }
.mode.on { margin-left: 478px; width: 112px; height: 42px; padding: 3px 0 0 10px; border: 1px solid #999; border-radius: 4px; background: #e6e5e3; gap: 10px; }
.m2 { margin-left: 33px; padding-top: 3px; gap: 19px; width: 134px; }
.m3 { padding-top: 6px; gap: 9px; }
.tabs { height: 32px; flex: none; display: flex; align-items: flex-end; padding-left: 2px; position: relative; z-index: 1; }
.tab { height: 30px; display: flex; align-items: center; justify-content: space-between; border: 1px solid #bdbab5; border-left: 0; border-radius: 4px 4px 0 0; background: #e8e6e4; padding: 5px 6px 0 5px; color: #666; }
.tab.active { width: 112px; height: 33px; margin-bottom: -1px; border-left: 1px solid #bdbab5; border-bottom: 0; background: #f3f2f0; color: #333; padding: 5px 8px 0 5px; }
.p2 { width: 78px; }
.p3 { width: 74px; }

.work { height: 625px; flex: none; margin: 0 2px 0 2px; border: 1px solid #bdbab5; border-radius: 0 4px 4px 4px; display: flex; }
.left { width: 270px; padding: 2px 0 0 2px; flex: none; display: flex; flex-direction: column; }
.search { height: 20px; width: 268px; flex: none; border: 1px solid #9e9a95; border-radius: 4px; background: #fff; color: #aaa; padding: 3px 4px; }
.tree { height: 248px; flex: none; margin: 1px 0 0 -1px; width: 270px; border: 1px solid #bab7b3; background: #fff; overflow: hidden; padding-top: 1px; }
.row { height: 18px; display: flex; align-items: center; padding-left: 2px; color: #333; }
.ar { width: 8px; height: 8px; margin-right: 9px; }
.ic { width: 16px; height: 16px; margin-right: 5px; flex: none; }
.tree .ic { margin-right: 6px; }
.noar { padding-left: 19px; }
.l1 { padding-left: 16px; }
.l2 { padding-left: 30px; }
.l3 { padding-left: 61px; }
.tree .l3 .ic { width: 12px; height: 12px; margin-right: 5px; }
.off { color: #999; }
.sel { background: linear-gradient(#eae9e8, #d9d8d6); }
.tree .sel .ic { margin-right: 4px; }
.sel span { background: #f07746; color: #fff; height: 18px; line-height: 18px; width: 25px; padding-left: 2px; }
.list .s12 { width: 11px; height: 11px; margin: 0 6px 0 2px; }
.sym { color: #1750ad; font-size: 12px; line-height: 15px; white-space: nowrap; letter-spacing: 0; display: flex; justify-content: center; }
.caption { height: 32px; flex: none; padding: 11px 4px; }
.listbox { height: 319px; flex: none; width: 270px; margin-left: -1px; display: flex; border: 1px solid #bab7b3; background: #fff; overflow: hidden; }
.list { flex: 1; }
.scroll { width: 13px; border: 1px solid #aaa; border-radius: 6px; background: #d5d3d1; display: flex; flex-direction: column; justify-content: space-between; align-items: center; padding-bottom: 2px; }
.thumb { width: 13px; height: 208px; margin-top: 9px; border: 1px solid #8e8b88; border-radius: 6px; background: linear-gradient(90deg, #fff, #eee); display: flex; justify-content: center; padding-top: 99px; }
.thumb i { width: 4px; height: 8px; background: repeating-linear-gradient(#999 0 1px, transparent 1px 3px); }

.mid { width: 47px; margin: 287px 0 0 7px; flex: none; display: flex; flex-direction: column; gap: 2px; }
.mid button { height: 31px; justify-content: center; border-color: #d0cdca; }
.mid .act { border-color: #aaa7a2; }

.right { width: 976px; margin: 11px 0 0 10px; }
.group { border: 1px solid #d8d5d2; position: relative; padding-left: 8px; }
.group h2 { position: absolute; top: -6px; left: 2px; margin: 0; padding: 0 4px; background: #f1f0ee; font-size: 9px; font-weight: 400; color: #333; white-space: nowrap; }
.def { height: 115px; padding-top: 13px; }
.line { display: flex; align-items: center; }
.input { margin-left: auto; margin-right: 8px; width: 903px; height: 19px; border: 1px solid #aaa6a2; border-radius: 3px; background: #fff; padding: 3px 4px; }
.desc { align-items: flex-start; margin-top: 6px; }
.area { margin-left: auto; margin-right: 7px; width: 905px; height: 68px; border: 1px solid #c2bfbb; background: #fff; }
.par { height: 174px; margin-top: 8px; padding-top: 12px; }
.par .line { height: 16px; margin-bottom: 7px; }
.par label { letter-spacing: -.2px; }
.combo { width: 212px; height: 11px; line-height: 9px; margin-left: auto; margin-right: 641px; border: 1px solid #aaa6a2; border-radius: 3px; background: #fff; display: flex; justify-content: space-between; }
.c2 { margin-right: 631px; }
.combo i { border-left: 1px solid #aaa; width: 11px; background: #eee; padding-top: 1px; }
.acts { height: 81px; margin-top: 8px; padding-top: 13px; }
.acts .line { height: 28px; margin-bottom: 7px; }
.acts label { width: 167px; letter-spacing: -.28px; }
.acts button, .foot button { height: 28px; padding-left: 5px; }
.acts button { gap: 10px; }
.bv { width: 73px; }
.br { width: 89px; }
.foot { display: flex; gap: 7px; padding: 9px 0 0 381px; }
.b1 { width: 95px; gap: 6px; }
.b2 { width: 113px; gap: 5px; }

.dialog { position: absolute; left: 436px; top: 33px; width: 669px; height: 51px; border-radius: 4px 4px 0 0; background: #f1f0ee; box-shadow: 0 10px 26px 0 rgba(0,0,0,.65), 0 2px 6px rgba(0,0,0,.4); }
.title { height: 18px; border-radius: 4px 4px 0 0; background: linear-gradient(#5b5a53, #403f3a); display: flex; align-items: center; gap: 2px; padding: 1px 0 0 5px; color: #dfdbd2; font-weight: 700; font-size: 9px; }
.title span { margin-left: 6px; letter-spacing: -.06px; }
.bar { height: 33px; display: grid; align-items: center; }
.bar > * { grid-area: 1 / 1; margin-left: var(--x); }
.bar .lab { letter-spacing: -.25px; }
.rec { --x: 2px; width: 26px; height: 26px; border: 1px solid #aaa6a2; border-radius: 4px; background: linear-gradient(#e5e4e2, #f7f7f6); display: flex; align-items: center; justify-content: center; }
.drop { --x: 204px; width: 72px; height: 18px; border: 1px solid #aaa6a2; border-radius: 4px; background: linear-gradient(#fff, #f0efed); display: flex; align-items: center; }
.drop span { margin-left: 6px; width: 31px; }
.drop i { height: 16px; border-left: 1px solid #aaa; padding: 5px 0 0 6px; }
.tin { --x: 361px; width: 149px; height: 19px; border: 1px solid #d05a3c; border-right: 1px dotted #777; border-radius: 3px 0 0 3px; background: #fff; padding: 3px 5px; color: #222; }
.tin span { border-right: 1px solid #000; letter-spacing: -.25px; }
.tbtn { --x: 510px; width: 20px; height: 19px; border: 1px solid #aaa6a2; border-left: 0; border-radius: 0 4px 4px 0; background: #f7f7f6; display: flex; align-items: center; justify-content: center; }

.switcher { position: absolute; left: 70px; top: 316px; width: 1226px; height: 145px; border-radius: 5px; padding: 5px 5px 5px 6px; background: rgba(0,0,0,.36); }
.inner { position: relative; height: 135px; border: 1px solid #fff; border-radius: 4px; background: #a06d5c; overflow: hidden; }
.inner svg { position: absolute; inset: 0; }
.ghosts { filter: blur(5px); }
.icons { filter: drop-shadow(0 3px 4px rgba(60,20,10,.3)); }
.glow { filter: drop-shadow(0 0 3px #fff); }
.name { position: absolute; left: 223px; top: 120px; color: #fff; font-weight: 700; font-size: 8px; line-height: 12px; letter-spacing: -.12px; }
```
